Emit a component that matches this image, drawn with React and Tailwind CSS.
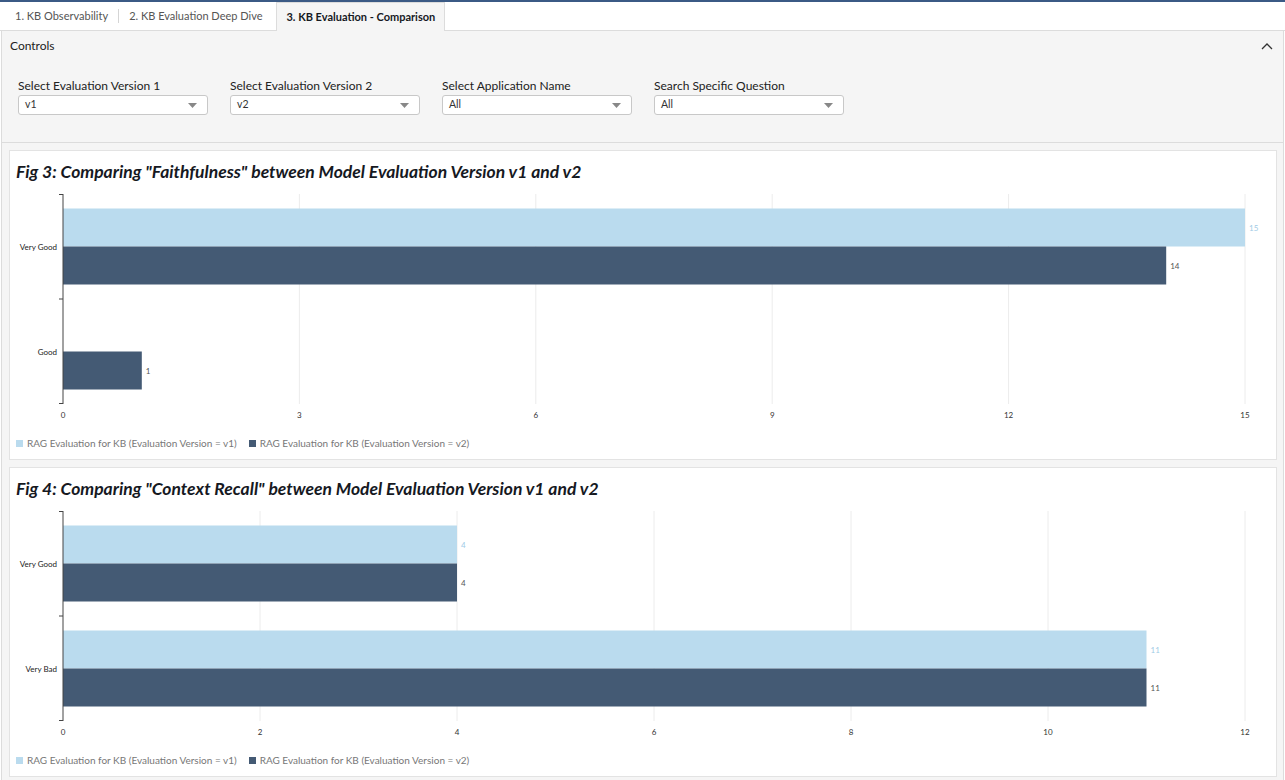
import React from "react";

const LIGHT = "#badbee";
const DARK = "#445a74";

const tabs = [
  { id: 1, label: "1. KB Observability" },
  { id: 2, label: "2. KB Evaluation Deep Dive" },
  { id: 3, label: "3. KB Evaluation - Comparison", active: true },
];

const controls = [
  { label: "Select Evaluation Version 1", value: "v1" },
  { label: "Select Evaluation Version 2", value: "v2" },
  { label: "Select Application Name", value: "All" },
  { label: "Search Specific Question", value: "All" },
];

const charts = [
  {
    title: 'Fig 3: Comparing "Faithfulness" between Model Evaluation Version v1 and v2',
    max: 15,
    ticks: [0, 3, 6, 9, 12, 15],
    rows: [
      { name: "Very Good", v1: 15, v2: 14 },
      { name: "Good", v1: null, v2: 1 },
    ],
  },
  {
    title: 'Fig 4: Comparing "Context Recall" between Model Evaluation Version v1 and v2',
    max: 12,
    ticks: [0, 2, 4, 6, 8, 10, 12],
    rows: [
      { name: "Very Good", v1: 4, v2: 4 },
      { name: "Very Bad", v1: 11, v2: 11 },
    ],
  },
];

function Select({ label, value }) {
  return (
    <div className="w-[190px]">
      <div className="text-[12px] leading-[14px] text-[#222]">{label}</div>
      <div className="mt-[2px] h-[20px] rounded-[3px] border border-[#c8c8c8] bg-white flex items-center justify-between pl-[6px] pr-[10px]">
        <span className="text-[10.5px] text-[#333]">{value}</span>
        <svg width="9" height="5" viewBox="0 0 9 5">
          <path d="M0 0 L9 0 L4.5 5 Z" fill="#888" />
        </svg>
      </div>
    </div>
  );
}

function BarChart({ chart }) {
  const W = 1266;
  const x0 = 53;
  const x1 = 1235;
  const top = 8;
  const band = 105;
  const bottom = top + band * chart.rows.length;
  const sx = (v) => x0 + ((x1 - x0) * v) / chart.max;

  return (
    <svg width={W} height="240" className="block">
      {chart.ticks.slice(1).map((t) => (
        <line key={t} x1={sx(t)} x2={sx(t)} y1={top} y2={bottom} stroke="#ececec" strokeWidth="1" />
      ))}
      {chart.rows.map((r, i) => {
        const yb = top + i * band;
        const mid = yb + band / 2;
        const y1 = mid - 38;
        const y2 = mid;
        return (
          <g key={r.name}>
            {r.v1 != null && (
              <>
                <rect x={x0} y={y1} width={sx(r.v1) - x0} height="38" fill={LIGHT} />
                <text x={sx(r.v1) + 4} y={y1 + 22} fontSize="8" fill="#9fcbe6">{r.v1}</text>
              </>
            )}
            <rect x={x0} y={y2} width={sx(r.v2) - x0} height="38" fill={DARK} />
            <text x={sx(r.v2) + 4} y={y2 + 22} fontSize="8" fill="#555">{r.v2}</text>
            <text x={x0 - 6} y={r.v1 != null ? mid + 3 : y2 + 3} fontSize="8" textAnchor="end" fill="#222">{r.name}</text>
            {i > 0 && <line x1={x0 - 4} x2={x0} y1={yb} y2={yb} stroke="#444" />}
          </g>
        );
      })}
      <line x1={x0} x2={x0} y1={top} y2={bottom} stroke="#444" />
      <line x1={x0 - 4} x2={x0} y1={top + 0.5} y2={top + 0.5} stroke="#444" />
      <line x1={x0 - 4} x2={x0} y1={bottom - 0.5} y2={bottom - 0.5} stroke="#444" />
      {chart.ticks.map((t) => (
        <text key={t} x={sx(t)} y={bottom + 14} fontSize="8" textAnchor="middle" fill="#333">{t}</text>
      ))}
    </svg>
  );
}

function ChartCard({ chart }) {
  return (
    <div className="h-[310px] bg-white border border-[#e3e3e3] flex flex-col">
      <div className="pl-[6px] pt-[11px] h-[35px] text-[17.5px] leading-[20px] font-bold italic text-[#16191f]">
        {chart.title}
      </div>
      <BarChart chart={chart} />
      <div className="flex items-center gap-[12px] pl-[6px] mt-[10px] text-[10px] text-[#777]">
        <div className="flex items-center gap-[4px]">
          <span className="w-[7px] h-[7px] bg-[#badbee]" />
          RAG Evaluation for KB (Evaluation Version = v1)
        </div>
        <div className="flex items-center gap-[4px]">
          <span className="w-[7px] h-[7px] bg-[#445a74]" />
          RAG Evaluation for KB (Evaluation Version = v2)
        </div>
      </div>
    </div>
  );
}

export default function App() {
  return (
    <div
      className="w-[1285px] h-[780px] overflow-hidden bg-white border-t-2 border-[#3b5a85]"
      style={{ fontFamily: "Lato, 'Liberation Sans', sans-serif" }}
    >
      <div className="flex items-end h-[29px] pl-[5px] border-b border-[#dcdcdc]">
        {tabs.map((t, i) =>
          t.active ? (
            <div
              key={t.id}
              className="h-[29px] -mb-px px-[9px] ml-[4px] flex items-center bg-[#f5f5f5] border border-b-0 border-[#dcdcdc] text-[11px] font-bold text-[#16191f]"
            >
              {t.label}
            </div>
          ) : (
            <div key={t.id} className="h-[28px] flex items-center">
              {i > 0 && <span className="w-px h-[14px] bg-[#d5d5d5]" />}
              <span className="px-[10px] text-[11px] text-[#555]">{t.label}</span>
            </div>
          )
        )}
      </div>
      <div className="mx-[1px] border-x border-[#dcdcdc] bg-[#f5f5f5] h-[749px]">
        <div className="h-[112px] border-b border-[#dcdcdc]">
          <div className="flex items-center justify-between h-[30px] pl-[8px] pr-[10px]">
            <span className="text-[12px] text-[#222]">Controls</span>
            <svg width="12" height="8" viewBox="0 0 12 8">
              <path d="M1 7 L6 2 L11 7" fill="none" stroke="#333" strokeWidth="1.3" />
            </svg>
          </div>
          <div className="flex gap-[22px] pl-[16px] mt-[18px]">
            {controls.map((c) => (
              <Select key={c.label} label={c.label} value={c.value} />
            ))}
          </div>
        </div>
        <div className="flex flex-col gap-[7px] pl-[7px] pr-[6px] pt-[7px]">
          {charts.map((c) => (
            <ChartCard key={c.title} chart={c} />
          ))}
        </div>
      </div>
    </div>
  );
}
